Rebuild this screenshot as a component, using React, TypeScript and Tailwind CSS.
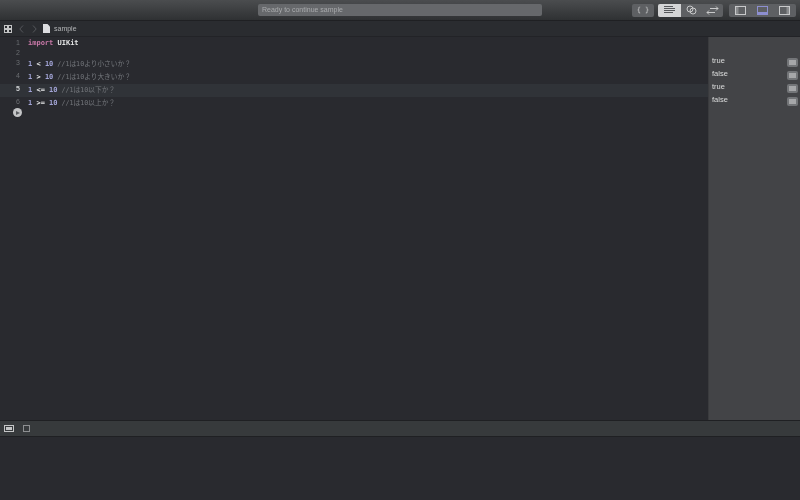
import React from "react";

const mono = "font-['DejaVu_Sans_Mono','Noto_Sans_CJK_JP',monospace] text-[7px] font-bold whitespace-pre leading-none";
const cmt = "font-['DejaVu_Sans_Mono','Noto_Sans_CJK_JP',monospace] font-normal text-[6.7px] text-[#74777c]";

function Row({ n, h, active, children }: { n: number; h: string; active?: boolean; children?: React.ReactNode }) {
  return (
    <div className={`flex items-center ${h} ${active ? "bg-[#303338]" : ""}`}>
      <div className={`w-[21px] pr-[1px] text-right text-[7px] font-['Liberation_Sans',sans-serif] ${n >= 3 ? "mb-[2px]" : ""} ${active ? "text-[#d0d2d4] font-bold" : "text-[#6a6d71]"}`}>{n}</div>
      <div className={`ml-[7px] ${mono}`}>{children}</div>
    </div>
  );
}

function Num({ children }: { children: React.ReactNode }) {
  return <span className="text-[#a2a4d6]">{children}</span>;
}

function Result({ t }: { t: string }) {
  return (
    <div className="flex h-[13px] items-center justify-between pl-[3px] pr-[2px]">
      <span className="mb-[2px] font-['Liberation_Sans',sans-serif] text-[7.5px] text-[#dcdddd]">{t}</span>
      <span className="mt-[2px] flex h-[9px] w-[11px] items-center justify-center rounded-[2px] bg-[#737578]">
        <span className="h-[5px] w-[7px] bg-[#a6a7a9]" />
      </span>
    </div>
  );
}

export default function App() {
  return (
    <div className="flex h-[500px] w-[800px] flex-col overflow-hidden bg-[#292a2f] blur-[0.3px]">
      {/* Title bar */}
      <div className="flex h-[21px] items-center border-b border-[#1f2023] bg-gradient-to-b from-[#4b4d4f] to-[#2f3133] pl-[258px] pr-[4px]">
        <div className="flex h-[12px] w-[284px] items-center rounded-[2px] bg-[#66686b] pl-[4px] font-['Liberation_Sans',sans-serif] text-[7px] text-[#a9abad]">
          Ready to continue sample
        </div>
        <div className="ml-[90px] flex h-[13px] w-[22px] items-center justify-center rounded-[2px] bg-[#5e6063] font-['DejaVu_Sans_Mono',monospace] text-[7px] text-[#d0d1d2]">
          {"{ }"}
        </div>
        <div className="ml-[4px] flex h-[13px] w-[65px] overflow-hidden rounded-[2px] bg-[#5e6063]">
          <div className="flex w-[23px] items-center justify-center bg-[#d4d5d6]">
            <svg width="13" height="8" viewBox="0 0 13 8" stroke="#55575a" strokeWidth="1"><path d="M1 .5h9M1 2.5h11M1 4.5h11M1 6.5h9" /></svg>
          </div>
          <div className="flex w-[21px] items-center justify-center">
            <svg width="11" height="10" viewBox="0 0 11 10" fill="none" stroke="#c8c9ca" strokeWidth="1"><circle cx="4" cy="4" r="3" /><circle cx="7" cy="6" r="3" /></svg>
          </div>
          <div className="flex w-[21px] items-center justify-center">
            <svg width="13" height="9" viewBox="0 0 13 9" fill="none" stroke="#c8c9ca" strokeWidth="1"><path d="M1 6.5h8M3 4.5l-2 2 2 2M12 2.5H4M10 .5l2 2-2 2" /></svg>
          </div>
        </div>
        <div className="ml-[6px] flex h-[13px] w-[67px] items-center justify-around rounded-[2px] bg-[#5e6063] px-[1px]">
          <svg width="11" height="9" viewBox="0 0 11 9" fill="none" stroke="#c8c9ca"><rect x=".5" y=".5" width="10" height="8" /><rect x="1" y="1" width="2.5" height="7" fill="#8a8c8e" stroke="none" /></svg>
          <svg width="11" height="9" viewBox="0 0 11 9" fill="none" stroke="#8d8fd0"><rect x=".5" y=".5" width="10" height="8" /><rect x="1" y="6" width="9" height="2" fill="#8d8fd0" stroke="none" /></svg>
          <svg width="11" height="9" viewBox="0 0 11 9" fill="none" stroke="#c8c9ca"><rect x=".5" y=".5" width="10" height="8" /><rect x="7.5" y="1" width="2.5" height="7" fill="#8a8c8e" stroke="none" /></svg>
        </div>
      </div>

      {/* Jump bar */}
      <div className="flex h-[16px] items-center border-b border-[#222327] bg-[#2a2c30] pl-[4px]">
        <svg width="8" height="8" viewBox="0 0 8 8" fill="none" stroke="#c4c5c6" strokeWidth="1"><rect x=".5" y=".5" width="3" height="3" /><rect x="4.5" y=".5" width="3" height="3" /><rect x=".5" y="4.5" width="3" height="3" /><rect x="4.5" y="4.5" width="3" height="3" /></svg>
        <svg className="ml-[7px]" width="5" height="8" viewBox="0 0 5 8" fill="none" stroke="#55575b"><path d="M4 .5.8 4 4 7.5" /></svg>
        <svg className="ml-[8px]" width="5" height="8" viewBox="0 0 5 8" fill="none" stroke="#55575b"><path d="M1 .5 4.2 4 1 7.5" /></svg>
        <svg className="ml-[6px]" width="7" height="9" viewBox="0 0 7 9"><path d="M0 0h4.5L7 2.5V9H0z" fill="#dcdde0" /></svg>
        <span className="ml-[4px] mt-[1px] font-['Liberation_Sans',sans-serif] text-[7px] text-[#b4b6b8]">sample</span>
      </div>

      {/* Editor */}
      <div className="flex h-[383px]">
        <div className="relative flex-1">
          <Row n={1} h="h-[12px]">
            <span className="text-[#c878a8]">import</span>
            <span className="text-[#e4e5e6]"> UIKit</span>
          </Row>
          <Row n={2} h="h-[9px]" />
          <Row n={3} h="h-[13px]">
            <Num>1</Num><span className="text-[#e4e5e6]"> &lt; </span><Num>10</Num><span className={cmt}> //1は10より小さいか？</span>
          </Row>
          <Row n={4} h="h-[13px]">
            <Num>1</Num><span className="text-[#e4e5e6]"> &gt; </span><Num>10</Num><span className={cmt}> //1は10より大きいか？</span>
          </Row>
          <Row n={5} h="h-[13px]" active>
            <Num>1</Num><span className="text-[#e4e5e6]"> &lt;= </span><Num>10</Num><span className={cmt}> //1は10以下か？</span>
          </Row>
          <Row n={6} h="h-[13px]">
            <Num>1</Num><span className="text-[#e4e5e6]"> &gt;= </span><Num>10</Num><span className={cmt}> //1は10以上か？</span>
          </Row>
          <div className="absolute left-[13px] top-[71px] flex h-[9px] w-[9px] items-center justify-center rounded-full bg-[#c4c5c7]">
            <span className="ml-[1px] h-0 w-0 border-y-[2.5px] border-l-[4px] border-y-transparent border-l-[#5a5c60]" />
          </div>
        </div>
        <div className="w-[92px] border-l border-[#3a3b3e] bg-[#434447] pt-[18px]">
          <Result t="true" />
          <Result t="false" />
          <Result t="true" />
          <Result t="false" />
        </div>
      </div>

      {/* Debug bar */}
      <div className="flex h-[17px] items-center border-y border-[#1f2023] bg-[#373a3c] pl-[4px]">
        <span className="flex h-[7px] w-[10px] items-center justify-center border border-[#c4c5c6]">
          <span className="h-[3px] w-[6px] bg-[#c4c5c6]" />
        </span>
        <span className="ml-[9px] h-[7px] w-[7px] border border-[#8d8f91]" />
      </div>

      {/* Console */}
      <div className="flex-1 bg-[#292a2f]" />
    </div>
  );
}
